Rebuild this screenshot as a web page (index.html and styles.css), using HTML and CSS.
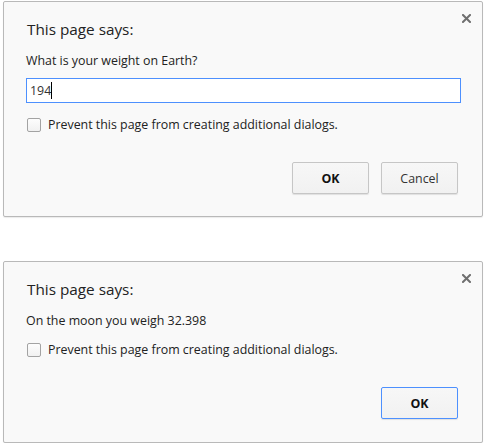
FILE: index.html
```html
<!DOCTYPE html>
<html>
<head>
<meta charset="utf-8">
<link rel="stylesheet" href="styles.css">
</head>
<body>
<div class="page">
  <div class="dialog">
    <button class="close" aria-label="Close">
      <svg width="9" height="9" viewBox="0 0 9 9"><path d="M1 1L8 8M8 1L1 8" stroke="#6f6f6f" stroke-width="2" stroke-linecap="square"/></svg>
    </button>
    <div class="title">This page says:</div>
    <div class="message">What is your weight on Earth?</div>
    <div class="input"><span class="value">194</span><span class="caret"></span></div>
    <label class="check check-after-input"><span class="box"></span><span>Prevent this page from creating additional dialogs.</span></label>
    <div class="buttons">
      <button class="btn btn-ok">OK</button>
      <button class="btn">Cancel</button>
    </div>
  </div>

  <div class="dialog dialog-alert">
    <button class="close" aria-label="Close">
      <svg width="9" height="9" viewBox="0 0 9 9"><path d="M1 1L8 8M8 1L1 8" stroke="#6f6f6f" stroke-width="2" stroke-linecap="square"/></svg>
    </button>
    <div class="title">This page says:</div>
    <div class="message">On the moon you weigh 32.398</div>
    <label class="check check-after-message"><span class="box"></span><span>Prevent this page from creating additional dialogs.</span></label>
    <div class="buttons">
      <button class="btn btn-ok btn-focus">OK</button>
    </div>
  </div>
</div>
</body>
</html>
```

FILE: styles.css
```css
html, body {
  margin: 0;
  padding: 0;
  background: #ffffff;
}

.page {
  padding: 1px 0 0 3px;
  display: flex;
  flex-direction: column;
  align-items: flex-start;
  gap: 44px;
  font-family: "Open Sans", "Noto Sans", "DejaVu Sans", sans-serif;
  color: #333333;
}

.dialog {
  position: relative;
  box-sizing: border-box;
  width: 480px;
  border: 1px solid #b9b9b9;
  border-radius: 2px;
  background: #f9f9f9;
  padding: 17px 0 22px 22px;
  display: flex;
  flex-direction: column;
  box-shadow: 0 1px 1px rgba(0,0,0,0.08);
}

.dialog-alert {
  padding-bottom: 23px;
}

.close {
  position: absolute;
  top: 11px;
  right: 10px;
  width: 11px;
  height: 11px;
  padding: 0;
  border: 0;
  background: transparent;
  display: flex;
  align-items: center;
  justify-content: center;
}

.title {
  font-size: 15.3px;
  line-height: 20px;
  color: #222222;
  padding-left: 1px;
}

.message {
  margin-top: 14px;
  font-size: 12.4px;
  line-height: 16px;
  color: #222222;
}

.input {
  margin-top: 9px;
  width: 435px;
  height: 25px;
  box-sizing: border-box;
  border: 1px solid #4d90fe;
  background: #ffffff;
  display: flex;
  align-items: center;
  padding-left: 3px;
  font-size: 12.4px;
  color: #333333;
}

.caret {
  display: inline-block;
  width: 1px;
  height: 17px;
  background: #000000;
}

.check {
  display: flex;
  align-items: center;
  gap: 7px;
  font-size: 12.4px;
  line-height: 14px;
  color: #222222;
  padding-left: 1px;
}

.check-after-input {
  margin-top: 15px;
}

.check-after-message {
  margin-top: 14px;
}

.box {
  width: 14px;
  height: 14px;
  box-sizing: border-box;
  border: 1px solid #a3a3a3;
  border-radius: 2px;
  background: linear-gradient(#fdfdfd, #f1f1f1);
}

.buttons {
  margin-top: 30px;
  display: flex;
  justify-content: flex-end;
  gap: 12px;
  padding-right: 24px;
}

.btn {
  width: 77px;
  height: 32px;
  box-sizing: border-box;
  border: 1px solid #c6c6c6;
  border-radius: 2px;
  background: linear-gradient(#f7f7f7, #f1f1f1);
  box-shadow: 0 1px 1px rgba(0,0,0,0.1);
  font-family: "Open Sans", "Noto Sans", "DejaVu Sans", sans-serif;
  font-size: 12.4px;
  color: #333333;
  padding: 0;
}

.btn-ok {
  font-weight: bold;
  color: #111111;
}

.btn-focus {
  border-color: #4d90fe;
}
```
